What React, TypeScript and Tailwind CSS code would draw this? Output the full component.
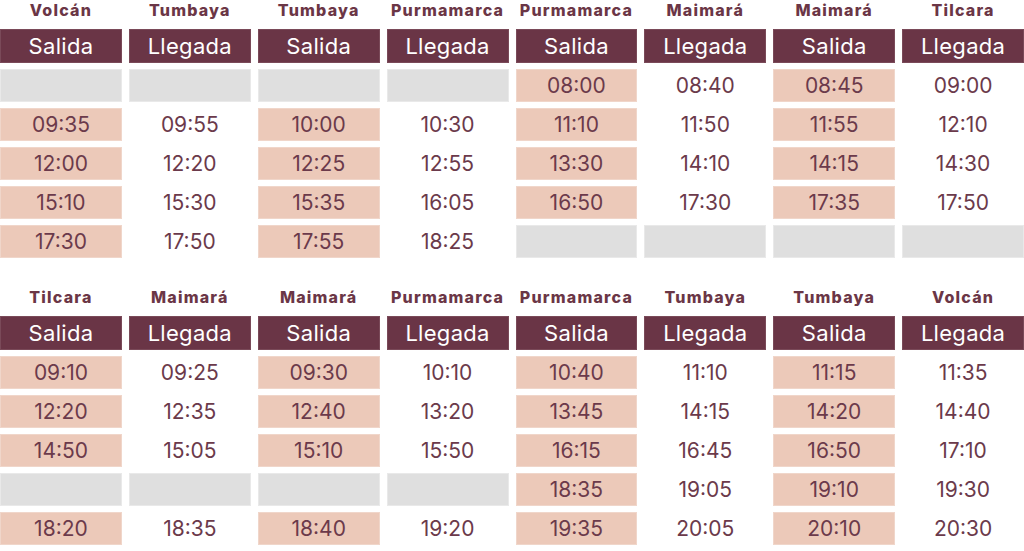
import React from "react";

type Block = { titles: string[]; rows: (string | null)[][] };

const blocks: Block[] = [
  {
    titles: ["Volcán", "Tumbaya", "Tumbaya", "Purmamarca", "Purmamarca", "Maimará", "Maimará", "Tilcara"],
    rows: [
      [null, null, null, null, "08:00", "08:40", "08:45", "09:00"],
      ["09:35", "09:55", "10:00", "10:30", "11:10", "11:50", "11:55", "12:10"],
      ["12:00", "12:20", "12:25", "12:55", "13:30", "14:10", "14:15", "14:30"],
      ["15:10", "15:30", "15:35", "16:05", "16:50", "17:30", "17:35", "17:50"],
      ["17:30", "17:50", "17:55", "18:25", null, null, null, null],
    ],
  },
  {
    titles: ["Tilcara", "Maimará", "Maimará", "Purmamarca", "Purmamarca", "Tumbaya", "Tumbaya", "Volcán"],
    rows: [
      ["09:10", "09:25", "09:30", "10:10", "10:40", "11:10", "11:15", "11:35"],
      ["12:20", "12:35", "12:40", "13:20", "13:45", "14:15", "14:20", "14:40"],
      ["14:50", "15:05", "15:10", "15:50", "16:15", "16:45", "16:50", "17:10"],
      [null, null, null, null, "18:35", "19:05", "19:10", "19:30"],
      ["18:20", "18:35", "18:40", "19:20", "19:35", "20:05", "20:10", "20:30"],
    ],
  },
];

function Cell({ value, salida }: { value: string | null; salida: boolean }) {
  if (value === null) {
    return <div className="h-[33px] bg-[#dfdfdf] border border-[#e9e9e9]" />;
  }
  return (
    <div
      className={
        salida
          ? "h-[33px] bg-[#ecc9b9] border border-[#f0d6ca] flex items-center justify-center text-[21px] text-[#6b3a4b] leading-none"
          : "h-[33px] flex items-center justify-center text-[21px] text-[#6b3a4b] leading-none"
      }
    >
      {value}
    </div>
  );
}

function TableBlock({ block }: { block: Block }) {
  return (
    <div className="grid grid-cols-8 gap-x-[7px]">
      {block.titles.map((t, i) => (
        <div key={"t" + i} className="h-[29px] flex justify-center">
          <span className="text-[16px] font-extrabold tracking-[1.2px] text-[#6b3646] leading-[20px]">{t}</span>
        </div>
      ))}
      {block.titles.map((_, i) => (
        <div
          key={"h" + i}
          className="h-[34px] bg-[#6a3546] border border-[#7a4a59] flex items-center justify-center text-white text-[22px] tracking-[0.3px] leading-none"
        >
          {i % 2 === 0 ? "Salida" : "Llegada"}
        </div>
      ))}
      <div className="col-span-8 flex flex-col gap-[6px] pt-[6px]">
        {block.rows.map((r, ri) => (
          <div key={ri} className="grid grid-cols-8 gap-x-[7px]">
            {r.map((v, ci) => (
              <Cell key={ci} value={v} salida={ci % 2 === 0} />
            ))}
          </div>
        ))}
      </div>
    </div>
  );
}

export default function App() {
  return (
    <div
      className="w-[1024px] h-[551px] bg-white overflow-hidden flex flex-col gap-[29px]"
      style={{ fontFamily: "Inter, 'Open Sans', sans-serif" }}
    >
      {blocks.map((b, i) => (
        <TableBlock key={i} block={b} />
      ))}
    </div>
  );
}
